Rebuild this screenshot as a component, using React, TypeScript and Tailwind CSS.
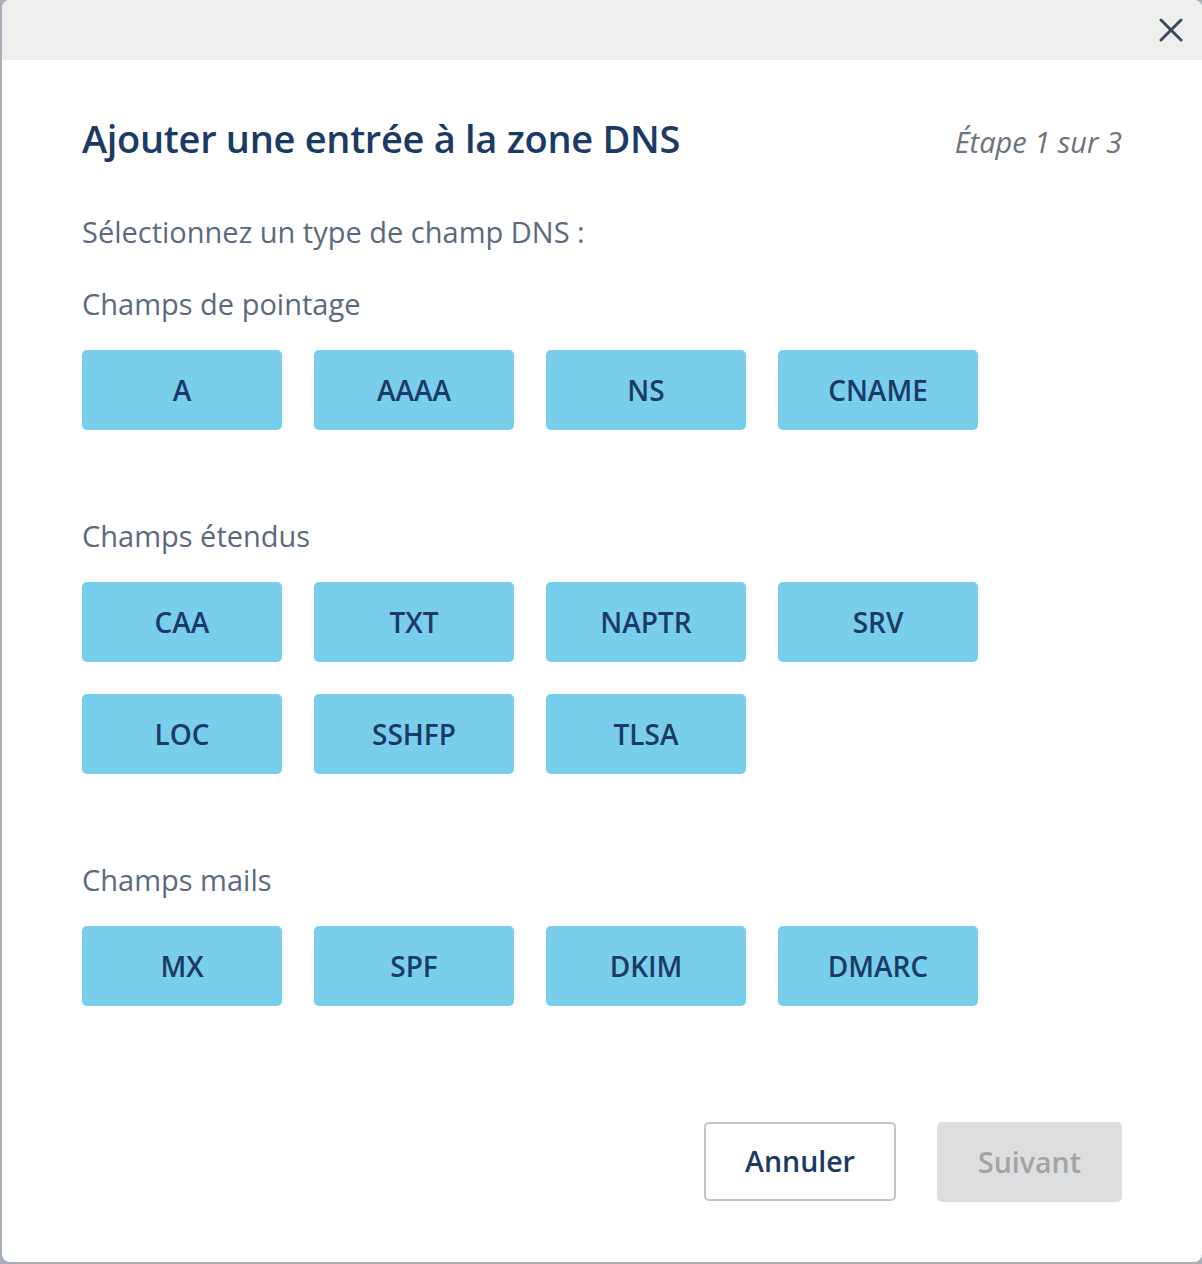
const groups = [
  { label: "Champs de pointage", items: ["A", "AAAA", "NS", "CNAME"] },
  { label: "Champs étendus", items: ["CAA", "TXT", "NAPTR", "SRV", "LOC", "SSHFP", "TLSA"] },
  { label: "Champs mails", items: ["MX", "SPF", "DKIM", "DMARC"] },
];

const font = "font-['Open_Sans','Liberation_Sans',sans-serif]";

const App = () => {
  return (
    <div className={`w-[1202px] h-[1264px] bg-[#a7afb8] pl-[2px] pb-[2px] ${font}`}>
      <div className="flex flex-col h-full w-full bg-white rounded-lg overflow-hidden">
        {/* header bar */}
        <div className="flex items-center justify-end h-[60px] bg-[#eeeeec] pr-[19px] shrink-0">
          <svg width="24" height="24" viewBox="0 0 24 24" className="text-[#3b4a5f]">
            <path d="M2 2 L22 22 M22 2 L2 22" stroke="currentColor" strokeWidth="3" strokeLinecap="round" />
          </svg>
        </div>

        <div className="flex flex-col flex-1 px-[80px] pt-[54px] pb-[60px]">
          <div className="flex items-baseline justify-between h-[48px]">
            <h1 className="text-[38px] leading-[48px] font-semibold tracking-[-0.3px] text-[#1b3a66]">
              Ajouter une entrée à la zone DNS
            </h1>
            <span className="text-[29px] leading-none italic text-[#6c737c]">Étape 1 sur 3</span>
          </div>

          <p className="mt-[52px] text-[29px] leading-[36px] text-[#5b6a7e]">
            Sélectionnez un type de champ DNS :
          </p>

          {groups.map((g, i) => (
            <div key={g.label} className={i === 0 ? "mt-[36px]" : "mt-[88px]"}>
              <p className="text-[29px] leading-[36px] text-[#5b6a7e]">{g.label}</p>
              <div className="mt-[28px] grid grid-cols-[repeat(4,200px)] gap-[32px]">
                {g.items.map((it) => (
                  <button
                    key={it}
                    className="h-[80px] rounded-[5px] bg-[#79cfeb] text-[28px] font-semibold text-[#1b3a66]"
                  >
                    {it}
                  </button>
                ))}
              </div>
            </div>
          ))}

          <div className="mt-auto flex justify-end gap-[41px]">
            <button className="w-[192px] h-[79px] rounded-[5px] border-2 border-[#c4c4c4] bg-white text-[28.5px] font-semibold text-[#1b3a66]">
              Annuler
            </button>
            <button className="w-[185px] h-[80px] rounded-[5px] bg-[#dddee0] text-[28.5px] font-semibold text-[#a3a3a3]">
              Suivant
            </button>
          </div>
        </div>
      </div>
    </div>
  );
};

export default App;
